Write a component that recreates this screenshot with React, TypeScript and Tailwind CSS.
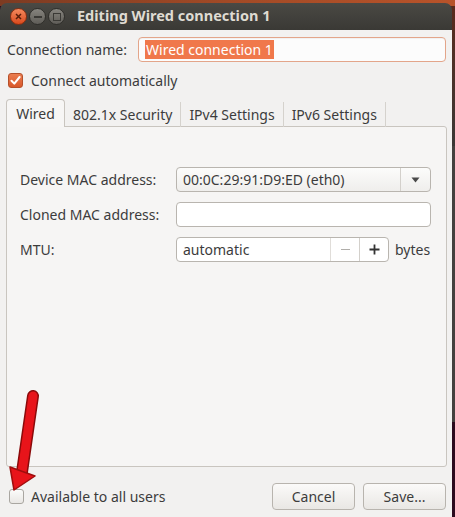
import React from "react";

const font = { fontFamily: '"Noto Sans", "DejaVu Sans", sans-serif' };

function Check({ checked }: { checked: boolean }) {
  return checked ? (
    <div className="w-[15px] h-[15px] rounded-[3px] border border-[#b5502a] bg-gradient-to-b from-[#ea7d50] to-[#d9582a] flex items-center justify-center">
      <svg width="11" height="11" viewBox="0 0 11 11">
        <path d="M1.5 5.8 L4.3 8.6 L9.6 2" fill="none" stroke="#fff" strokeWidth="2" strokeLinecap="round" strokeLinejoin="round" />
      </svg>
    </div>
  ) : (
    <div className="w-[15px] h-[15px] rounded-[3px] border border-[#a9a6a1] bg-gradient-to-b from-[#fbfbfa] to-[#e9e7e4]" />
  );
}

export default function App() {
  return (
    <div className="relative w-[455px] h-[517px] overflow-hidden bg-[#2c0a1e] text-[#3c3c3c] text-[14px]" style={font}>
      {/* desktop background strips */}
      <div className="absolute inset-x-0 top-0 h-[6px] bg-gradient-to-r from-[#7d3b22] via-[#a24a26] to-[#b8532a]" />
      <div className="absolute right-0 top-[6px] w-[4px] h-[140px] bg-gradient-to-b from-[#5a2a1c] to-[#3a3735]" />
      <div className="absolute right-0 top-[146px] w-[4px] h-[276px] bg-[#44403e]" />
      <div className="absolute right-0 top-[422px] w-[4px] h-[95px] bg-[#2c0a1e]" />

      <div className="absolute left-0 top-[3px] w-[452px] h-[514px] flex flex-col">
        {/* title bar */}
        <div className="h-[27px] rounded-t-[7px] bg-gradient-to-b from-[#4a4944] to-[#3a3935] flex items-center pl-[10px] shrink-0">
          <div className="w-[17px] h-[17px] rounded-full bg-gradient-to-b from-[#f4895c] to-[#d8481a] border border-[#8a2e10] flex items-center justify-center">
            <svg width="7" height="7" viewBox="0 0 7 7">
              <path d="M1 1 L6 6 M6 1 L1 6" stroke="#5a1e0a" strokeWidth="1.5" />
            </svg>
          </div>
          <div className="ml-[2px] w-[17px] h-[17px] rounded-full bg-gradient-to-b from-[#86847e] to-[#5f5d58] border border-[#2f2e2a] flex items-center justify-center">
            <div className="w-[8px] h-[2px] bg-[#3a3935]" />
          </div>
          <div className="ml-[2px] w-[17px] h-[17px] rounded-full bg-gradient-to-b from-[#86847e] to-[#5f5d58] border border-[#2f2e2a] flex items-center justify-center">
            <div className="w-[8px] h-[8px] border-[1.5px] border-[#3a3935]" />
          </div>
          <div className="ml-[12px] -mt-[2px] text-[#dfdbd2] font-bold text-[14.5px] leading-none">Editing Wired connection 1</div>
        </div>

        {/* body */}
        <div className="flex-1 bg-[#f2f1f0] flex flex-col pl-[6px] pr-[6px]">
          <div className="flex items-center h-[25px] mt-[7px]">
            <div className="w-[132px] pl-[1px]">Connection name:</div>
            <div className="flex-1 h-[25px] rounded-[4px] border border-[#e3a58a] bg-[#fcfcfc] flex items-center pl-[6px] shadow-[inset_0_1px_1px_rgba(0,0,0,0.05)]">
              <span className="bg-[#f0784b] text-white px-[1px] leading-[19px]">Wired connection 1</span>
            </div>
          </div>

          <div className="flex items-center h-[16px] mt-[10px] pl-[2px]">
            <Check checked />
            <span className="ml-[8px]">Connect automatically</span>
          </div>

          {/* tabs */}
          <div className="flex items-end h-[28px] mt-[11px] relative z-10">
            <div className="h-[28px] px-[8px] border border-[#c9c5bf] border-b-0 rounded-t-[4px] bg-[#f7f6f5] flex items-center w-[59px] justify-center">Wired</div>
            <div className="h-[25px] px-[8px] border-r border-[#d5d2cd] flex items-center">802.1x Security</div>
            <div className="h-[25px] px-[8px] border-r border-[#d5d2cd] flex items-center">IPv4 Settings</div>
            <div className="h-[25px] px-[8px] border-r border-[#d5d2cd] flex items-center">IPv6 Settings</div>
          </div>
          <div className="h-[341px] w-[441px] -mt-[1px] border border-[#c9c5bf] rounded-b-[3px] rounded-tr-[3px] bg-[#f6f5f4] flex flex-col pl-[13px] pr-[15px] pt-[40px]">
            <div className="flex items-center h-[25px]">
              <div className="w-[156px]">Device MAC address:</div>
              <div className="flex-1 h-[25px] rounded-[4px] border border-[#b9b5af] bg-gradient-to-b from-[#fcfcfb] to-[#efeeec] flex items-center">
                <span className="flex-1 pl-[6px]">00:0C:29:91:D9:ED (eth0)</span>
                <div className="w-[30px] h-full border-l border-[#d3d0cb] flex items-center justify-center">
                  <svg width="9" height="6" viewBox="0 0 9 6"><path d="M0.5 0.5 L8.5 0.5 L4.5 5.5 Z" fill="#4a4a4a" /></svg>
                </div>
              </div>
            </div>
            <div className="flex items-center h-[25px] mt-[10px]">
              <div className="w-[156px]">Cloned MAC address:</div>
              <div className="flex-1 h-[25px] rounded-[4px] border border-[#b9b5af] bg-white" />
            </div>
            <div className="flex items-center h-[25px] mt-[10px]">
              <div className="w-[156px]">MTU:</div>
              <div className="w-[213px] h-[25px] rounded-[4px] border border-[#b9b5af] bg-white flex items-center">
                <span className="flex-1 pl-[6px]">automatic</span>
                <div className="w-[29px] h-full border-l border-[#e0ddd9] flex items-center justify-center">
                  <div className="w-[9px] h-[1.5px] bg-[#b0aeaa]" />
                </div>
                <div className="w-[29px] h-full border-l border-[#d3d0cb] flex items-center justify-center">
                  <svg width="11" height="11" viewBox="0 0 11 11"><path d="M5.5 0.5 V10.5 M0.5 5.5 H10.5" stroke="#333" strokeWidth="1.8" /></svg>
                </div>
              </div>
              <span className="ml-[6px]">bytes</span>
            </div>
          </div>

          {/* bottom row */}
          <div className="flex items-center mt-[16px] h-[27px]">
            <div className="pl-[3px] flex items-center">
              <Check checked={false} />
              <span className="ml-[7px]">Available to all users</span>
            </div>
            <div className="flex-1" />
            <button className="w-[83px] h-[27px] rounded-[4px] border border-[#b8b4ae] bg-gradient-to-b from-[#fbfaf9] to-[#e9e7e4] text-[#3c3c3c]">Cancel</button>
            <button className="ml-[8px] w-[83px] h-[27px] rounded-[4px] border border-[#b8b4ae] bg-gradient-to-b from-[#fbfaf9] to-[#e9e7e4] text-[#3c3c3c]">Save...</button>
          </div>
        </div>
      </div>

      {/* red arrow annotation */}
      <svg className="absolute left-0 top-0" width="455" height="517" viewBox="0 0 455 517">
        <path d="M33 396 L22 472" stroke="#8a0a0a" strokeWidth="12" strokeLinecap="round" />
        <path d="M33 396 L22 472" stroke="#e8141a" strokeWidth="9" strokeLinecap="round" />
        <path d="M10 467 L35 476 L14 490 Z" fill="#e8141a" stroke="#a00d0d" strokeWidth="1.5" strokeLinejoin="round" />
      </svg>
    </div>
  );
}
